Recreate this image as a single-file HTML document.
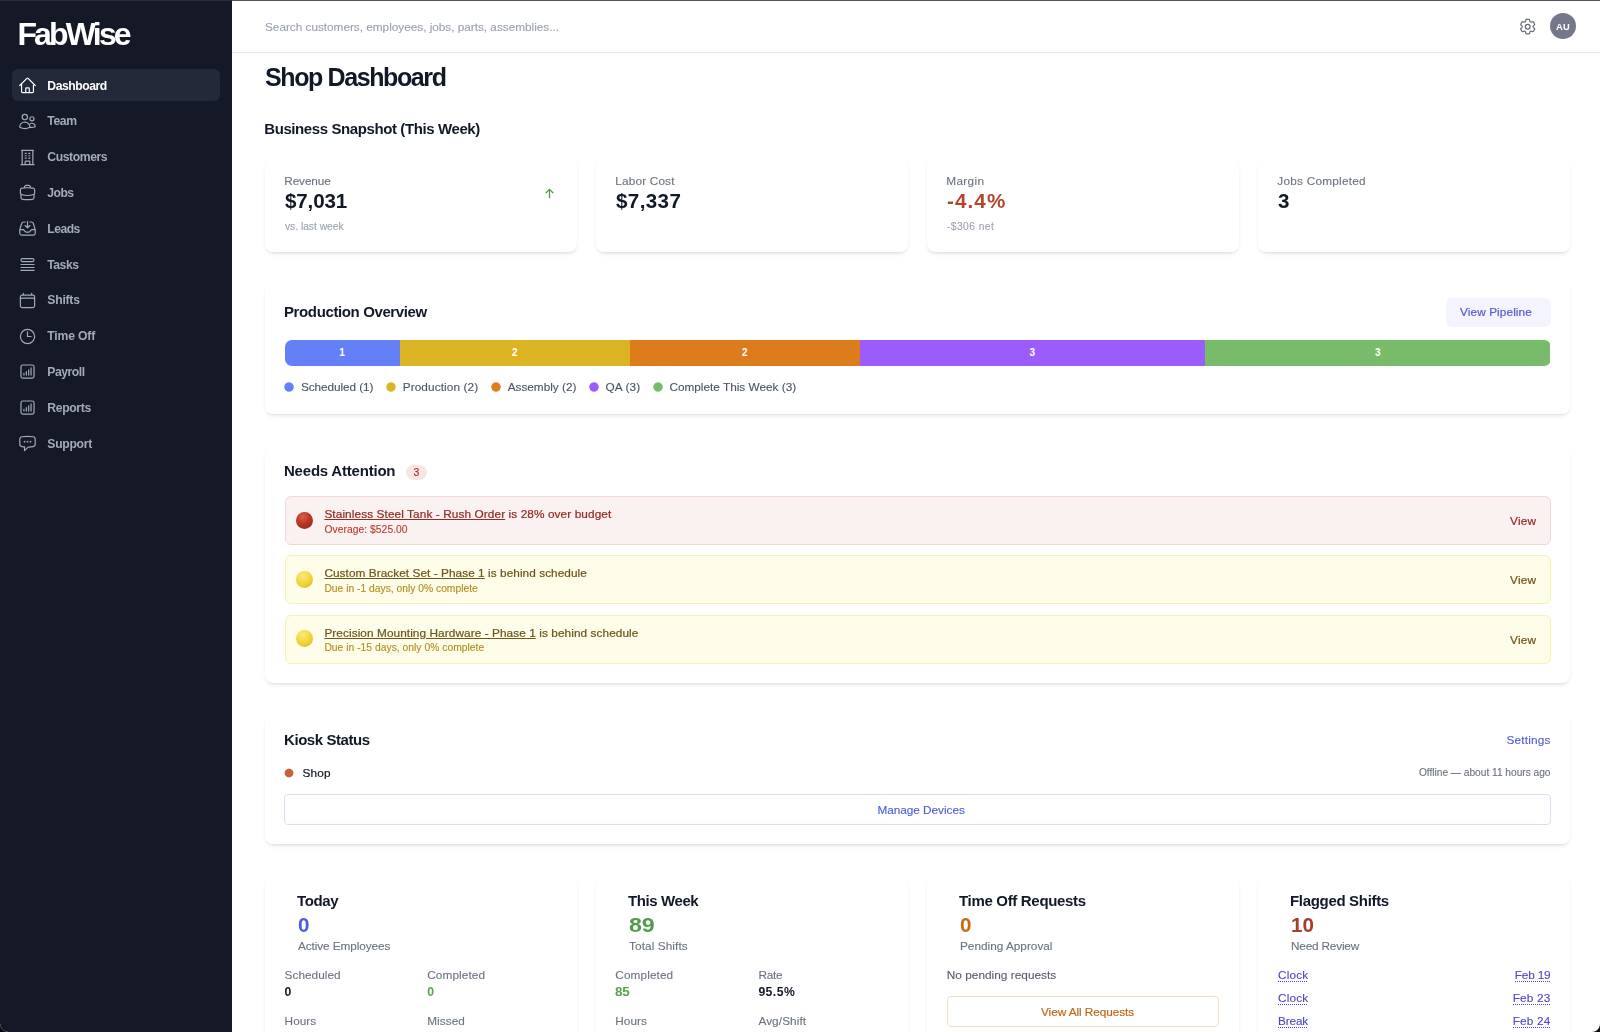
<!DOCTYPE html>
<html lang="en"><head>
<meta charset="utf-8">
<title>FabWise - Shop Dashboard</title>
<style>
*{box-sizing:border-box;margin:0;padding:0}
html,body{width:1600px;height:1032px;overflow:hidden;background:#fff}
body{position:relative;font-family:"Liberation Sans",sans-serif;font-size:11.8px;color:#111827;letter-spacing:-0.15px}
.abs{position:absolute}
.t{position:absolute;white-space:nowrap;line-height:20px;margin-top:-10px;will-change:opacity}
.b{font-weight:700}
.sm{font-size:12.2px}
body{-webkit-text-stroke:0.12px currentColor}
.b,.h2,.h3,.val,.val2,#sidebar,.seg,h1{-webkit-text-stroke:0}
a{color:inherit;text-decoration:none}
/* sidebar */
#sidebar{position:absolute;left:0;top:0;width:232px;height:1032px;background:#151827}
#sidebar .logo{left:17.4px;top:33.5px;font-size:32px;font-weight:700;color:#fff;line-height:40px;margin-top:-20px}
#sidebar nav a{position:absolute;left:11.8px;width:208px;height:32px;border-radius:6px;display:block;color:#a4a9b8;font-weight:700;font-size:12.2px}
#sidebar nav a.active{background:#232938;color:#fff}
#sidebar nav a svg{position:absolute;left:6.2px;top:6.9px;width:19px;height:19px;fill:none;stroke:currentColor;stroke-width:1.5;stroke-linecap:round;stroke-linejoin:round}
#sidebar nav a span{position:absolute;left:35.5px;top:16.4px;line-height:20px;margin-top:-10px;white-space:nowrap;will-change:opacity}
/* header */
#topline{position:absolute;left:0;top:0;width:1600px;height:1px;background:linear-gradient(90deg,#2b2d3e 232px,#555 232px)}
#header{position:absolute;left:232px;top:1px;width:1368px;height:52px;background:#fff;border-bottom:1px solid #e5e7eb}
/* cards */
.card{position:absolute;background:#fff;border-radius:8px;box-shadow:0 3px 5px -2px rgba(0,0,0,.13),0 1px 2px rgba(0,0,0,.035)}
.lbl{color:#6b7280}
.val{font-size:20.6px;font-weight:700}
.sub{font-size:10.3px;color:#9ca3af}
.h2{margin-left:-0.8px;font-size:15px;font-weight:700;color:#111827}

.h3{font-size:15px;font-weight:700;color:#111827;margin-left:-1px}
.val2{font-size:20.6px;font-weight:700}
.med{-webkit-text-stroke:0.22px currentColor}
.btn-soft{position:absolute;display:block;background:#f3f4fe;border-radius:6px;color:#555bd6}
.bar{position:absolute;border-radius:7px;overflow:hidden}
.seg{position:absolute;top:0;height:100%;text-align:center;color:#fff;font-weight:700;font-size:10px;will-change:opacity;line-height:26px;letter-spacing:0}
.dot{position:absolute;display:block;width:12px;height:12px;margin:-6px 0 0 -6px;--r:4.7px;background:radial-gradient(circle at 50% 50%,var(--c) calc(var(--r) - .5px),transparent calc(var(--r) + .5px))}
.leg{color:#4b5563}
.badge{position:absolute;display:block;border-radius:8px;background:#fbe4e4;color:#9b2c2c}
.alert{position:absolute;border-radius:6px;border:1px solid}
.alert.red{background:#faf2f1;border-color:#f2d6d8;color:#932a24}
.alert.red .l2{color:#bb3a2e}
.alert.yel{background:#fdfdea;border-color:#f7f1b4;color:#6e5518}
.alert.yel .l2{color:#b48c1c}
.alert .l1 a{text-decoration:underline;text-underline-offset:0.6px;text-decoration-thickness:0.9px}
.alert .l2{font-size:10.3px}
.alert .t{margin-top:-11px}
.emoji{position:absolute;display:block;width:17.4px;height:17.4px;border-radius:50%}
.emoji.r{background:radial-gradient(circle at 40% 28%,#d8604c 0%,#b93623 45%,#8e2416 100%)}
.emoji.y{background:radial-gradient(circle at 40% 28%,#fbea7a 0%,#f2d43a 50%,#d9b520 100%)}
.link{color:#4c5cd6}
.btn-outline{position:absolute;display:block;border:1px solid;border-radius:4px;background:#fff}
.btn-outline .t{margin-left:-1px;margin-top:-11px}
.flag{color:#5046c8;text-decoration:underline dotted;text-decoration-thickness:1px;text-underline-offset:2px}
</style>
</head>
<body>
<aside id="sidebar">
  <div class="t logo" style="letter-spacing: -2.84px;">FabWise</div>
  <nav>
    <a class="active" style="top:69.2px"><svg viewBox="0 0 24 24"><path d="m2.25 12 8.954-8.955c.44-.439 1.152-.439 1.591 0L21.75 12M4.5 9.75v10.125c0 .621.504 1.125 1.125 1.125H9.75v-4.875c0-.621.504-1.125 1.125-1.125h2.25c.621 0 1.125.504 1.125 1.125V21h4.125c.621 0 1.125-.504 1.125-1.125V9.75M8.25 21h8.25"></path></svg><span style="letter-spacing: -0.46px;">Dashboard</span></a>
    <a style="top:105.0px"><svg viewBox="0 0 24 24"><path d="M15 19.128a9.38 9.38 0 0 0 2.625.372 9.337 9.337 0 0 0 4.121-.952 4.125 4.125 0 0 0-7.533-2.493M15 19.128v-.003c0-1.113-.285-2.16-.786-3.07M15 19.128v.106A12.318 12.318 0 0 1 8.624 21c-2.331 0-4.512-.645-6.374-1.766l-.001-.109a6.375 6.375 0 0 1 11.964-3.07M12 6.375a3.375 3.375 0 1 1-6.75 0 3.375 3.375 0 0 1 6.75 0Zm8.25 2.25a2.625 2.625 0 1 1-5.25 0 2.625 2.625 0 0 1 5.25 0Z"></path></svg><span style="letter-spacing: -0.39px;">Team</span></a>
    <a style="top:140.8px"><svg viewBox="0 0 24 24"><path d="M3.75 21h16.5M4.5 3h15M5.25 3v18m13.5-18v18M9 6.75h1.5m-1.5 3h1.5m-1.5 3h1.5m3-6H15m-1.5 3H15m-1.5 3H15M9 21v-3.375c0-.621.504-1.125 1.125-1.125h3.75c.621 0 1.125.504 1.125 1.125V21"></path></svg><span style="letter-spacing: -0.42px;">Customers</span></a>
    <a style="top:176.6px"><svg viewBox="0 0 24 24"><path d="M20.25 14.15v4.25c0 1.094-.787 2.036-1.872 2.18-2.087.277-4.216.42-6.378.42s-4.291-.143-6.378-.42c-1.085-.144-1.872-1.086-1.872-2.18v-4.25m16.5 0a2.18 2.18 0 0 0 .75-1.661V8.706c0-1.081-.768-2.015-1.837-2.175a48.114 48.114 0 0 0-3.413-.387m4.5 8.006c-.194.165-.42.295-.673.38A23.978 23.978 0 0 1 12 15.75c-2.648 0-5.195-.429-7.577-1.22a2.016 2.016 0 0 1-.673-.38m0 0A2.18 2.18 0 0 1 3 12.489V8.706c0-1.081.768-2.015 1.837-2.175a48.111 48.111 0 0 1 3.413-.387m7.5 0V5.25A2.25 2.25 0 0 0 13.5 3h-3a2.25 2.25 0 0 0-2.25 2.25v.894m7.5 0a48.667 48.667 0 0 0-7.5 0"></path></svg><span style="letter-spacing: -0.53px;">Jobs</span></a>
    <a style="top:212.4px"><svg viewBox="0 0 24 24"><path d="M9 3.75H6.912a2.25 2.25 0 0 0-2.15 1.588L2.35 13.177a2.25 2.25 0 0 0-.1.661V18a2.25 2.25 0 0 0 2.25 2.25h15A2.25 2.25 0 0 0 21.75 18v-4.162c0-.224-.034-.447-.1-.661L19.24 5.338a2.25 2.25 0 0 0-2.15-1.588H15M2.25 13.5h3.86a2.25 2.25 0 0 1 2.012 1.244l.256.512a2.25 2.25 0 0 0 2.013 1.244h3.218a2.25 2.25 0 0 0 2.013-1.244l.256-.512a2.25 2.25 0 0 1 2.013-1.244h3.859M12 3v8.250m0 0-3-3m3 3 3-3"></path></svg><span style="letter-spacing: -0.54px;">Leads</span></a>
    <a style="top:248.2px"><svg viewBox="0 0 24 24"><path d="M3.75 12h16.5m-16.5 3.75h16.5M3.75 19.5h16.5M5.625 4.5h12.75a1.875 1.875 0 0 1 0 3.75H5.625a1.875 1.875 0 0 1 0-3.75Z"></path></svg><span style="letter-spacing: -0.5px;">Tasks</span></a>
    <a style="top:284.0px"><svg viewBox="0 0 24 24"><path d="M6.75 3v2.25M17.25 3v2.25M3 18.75V7.5a2.25 2.25 0 0 1 2.25-2.25h13.5A2.25 2.25 0 0 1 21 7.500v11.250m-18 0A2.25 2.25 0 0 0 5.25 21h13.5A2.25 2.25 0 0 0 21 18.750m-18 0v-7.500A2.25 2.25 0 0 1 5.250 9h13.500A2.250 2.250 0 0 1 21 11.250v7.500"></path></svg><span style="letter-spacing: -0.24px;">Shifts</span></a>
    <a style="top:319.8px"><svg viewBox="0 0 24 24"><path d="M12 6v6h4.5m4.5 0a9 9 0 1 1-18 0 9 9 0 0 1 18 0Z"></path></svg><span style="letter-spacing: -0.18px;">Time Off</span></a>
    <a style="top:355.6px"><svg viewBox="0 0 24 24"><path d="M7.5 14.25v2.25m3-4.5v4.5m3-6.75v6.75m3-9v9M6 20.25h12A2.25 2.25 0 0 0 20.250 18V6A2.250 2.250 0 0 0 18 3.750H6A2.250 2.250 0 0 0 3.750 6v12A2.250 2.250 0 0 0 6 20.250Z"></path></svg><span style="letter-spacing: -0.48px;">Payroll</span></a>
    <a style="top:391.4px"><svg viewBox="0 0 24 24"><path d="M7.5 14.25v2.25m3-4.5v4.5m3-6.75v6.75m3-9v9M6 20.25h12A2.25 2.25 0 0 0 20.250 18V6A2.250 2.250 0 0 0 18 3.750H6A2.250 2.250 0 0 0 3.750 6v12A2.250 2.250 0 0 0 6 20.250Z"></path></svg><span style="letter-spacing: -0.36px;">Reports</span></a>
    <a style="top:427.2px"><svg viewBox="0 0 24 24"><path d="M8.625 9.75a.375.375 0 1 1-.75 0 .375.375 0 0 1 .75 0Zm0 0H8.25m4.125 0a.375.375 0 1 1-.75 0 .375.375 0 0 1 .75 0Zm0 0H12m4.125 0a.375.375 0 1 1-.75 0 .375.375 0 0 1 .75 0Zm0 0h-.375m-13.5 3.01c0 1.6 1.123 2.994 2.707 3.227 1.087.16 2.185.283 3.293.369V21l4.184-4.183a1.14 1.14 0 0 1 .778-.332 48.294 48.294 0 0 0 5.83-.498c1.585-.233 2.708-1.626 2.708-3.228V6.741c0-1.602-1.123-2.995-2.707-3.228A48.394 48.394 0 0 0 12 3c-2.392 0-4.744.175-7.043.513C3.373 3.746 2.25 5.14 2.25 6.741v6.018Z"></path></svg><span style="letter-spacing: -0.29px;">Support</span></a>
  </nav>
</aside>
<div id="topline"></div>
<header id="header">
  <div class="t" style="left: 33px; top: 26px; font-size: 11.8px; color: rgb(154, 161, 173); letter-spacing: -0.02px;">Search customers, employees, jobs, parts, assemblies...</div>
  <svg class="abs" style="left:1285.6px;top:15.9px;width:19.4px;height:19.4px;fill:none;stroke:#686c76;stroke-width:1.5;stroke-linecap:round;stroke-linejoin:round" viewBox="0 0 24 24"><path d="M9.594 3.94c.09-.542.56-.94 1.11-.94h2.593c.55 0 1.02.398 1.11.94l.213 1.281c.063.374.313.686.645.87.074.04.147.083.22.127.325.196.72.257 1.075.124l1.217-.456a1.125 1.125 0 0 1 1.37.49l1.296 2.247a1.125 1.125 0 0 1-.26 1.431l-1.003.827c-.293.241-.438.613-.43.992a7.723 7.723 0 0 1 0 .255c-.008.378.137.75.43.991l1.004.827c.424.35.534.955.26 1.43l-1.298 2.247a1.125 1.125 0 0 1-1.369.491l-1.217-.456c-.355-.133-.75-.072-1.076.124a6.470 6.470 0 0 1-.22.128c-.331.183-.581.495-.644.869l-.213 1.281c-.09.543-.56.940-1.110.940h-2.594c-.55 0-1.019-.398-1.110-.940l-.213-1.281c-.062-.374-.312-.686-.644-.870a6.520 6.520 0 0 1-.22-.127c-.325-.196-.72-.257-1.076-.124l-1.217.456a1.125 1.125 0 0 1-1.369-.490l-1.297-2.247a1.125 1.125 0 0 1 .26-1.431l1.004-.827c.292-.24.437-.613.43-.991a6.932 6.932 0 0 1 0-.255c.007-.38-.138-.751-.43-.992l-1.004-.827a1.125 1.125 0 0 1-.26-1.430l1.297-2.247a1.125 1.125 0 0 1 1.370-.491l1.216.456c.356.133.751.072 1.076-.124.072-.044.146-.086.22-.128.332-.183.582-.495.644-.869l.214-1.280Z"></path><path d="M15 12a3 3 0 1 1-6 0 3 3 0 0 1 6 0Z"></path></svg>
  <div class="abs" style="left:1318px;top:12.4px;width:26px;height:26px;border-radius:50%;background:#74788a"></div>
  <div class="t b sm" style="left:1318px;width:26px;text-align:center;top:25.5px;font-size:9.3px;color:#fff;letter-spacing:0.2px">AU</div>
</header>
<main id="main">
  <h1 class="t b" style="left: 265px; top: 77px; font-size: 25px; line-height: 30px; margin-top: -15px; color: rgb(17, 24, 39); letter-spacing: -1.39px;">Shop Dashboard</h1>
  <h2 class="t h2" style="left: 265px; top: 128.8px; letter-spacing: -0.4px;">Business Snapshot (This Week)</h2>

  <!-- snapshot cards -->
  <section class="card" style="left:265px;top:158px;width:312px;height:94px">
    <div class="t lbl" style="left: 19.3px; top: 22.6px; letter-spacing: -0.13px;">Revenue</div>
    <div class="t val" style="left: 20px; top: 43.4px; letter-spacing: -0.15px;">$7,031</div>
    <div class="t sub" style="left: 20px; top: 69.2px; letter-spacing: -0.03px;">vs. last week</div>
    <svg class="abs" style="left:278.8px;top:30px;width:11px;height:11px;fill:none;stroke:#4f9a3f;stroke-width:2.7;stroke-linecap:round;stroke-linejoin:round" viewBox="0 0 24 24"><path d="M4.5 10.5 12 3m0 0 7.5 7.500M12 3v18"></path></svg>
  </section>
  <section class="card" style="left:596px;top:158px;width:312px;height:94px">
    <div class="t lbl" style="left: 19.3px; top: 22.6px; letter-spacing: 0.16px;">Labor Cost</div>
    <div class="t val" style="left: 20px; top: 43.4px; letter-spacing: 0.37px;">$7,337</div>
  </section>
  <section class="card" style="left:927px;top:158px;width:312px;height:94px">
    <div class="t lbl" style="left: 19.3px; top: 22.6px; letter-spacing: 0.32px;">Margin</div>
    <div class="t val" style="left: 20px; top: 43.4px; color: rgb(180, 68, 45); letter-spacing: 1.11px;">-4.4%</div>
    <div class="t sub" style="left: 20px; top: 69.2px; letter-spacing: 0.41px;">-$306 net</div>
  </section>
  <section class="card" style="left:1258px;top:158px;width:312px;height:94px">
    <div class="t lbl" style="left: 19.3px; top: 22.6px; letter-spacing: 0.24px;">Jobs Completed</div>
    <div class="t val" style="left:20px;top:43.4px">3</div>
  </section>

  <!-- production overview -->
  <section class="card" style="left:265px;top:283px;width:1305px;height:131px">
    <h3 class="t h3" style="left: 20px; top: 29px; letter-spacing: -0.38px;">Production Overview</h3>
    <a class="btn-soft" style="left:1181px;top:14.6px;width:104.5px;height:29px"><span class="t med" style="left: 14px; top: 14.4px; letter-spacing: 0.1px;">View Pipeline</span></a>
    <div class="bar" style="left:19.5px;top:56.6px;width:1266px;height:26px">
      <div class="seg" style="left:0;width:115px;background:#6480f7"><span>1</span></div>
      <div class="seg" style="left:115px;width:230.5px;background:#dbb424"><span>2</span></div>
      <div class="seg" style="left:345.5px;width:229.7px;background:#dc7c1c"><span>2</span></div>
      <div class="seg" style="left:575.2px;width:345.2px;background:#9c5cfa"><span>3</span></div>
      <div class="seg" style="left:920.4px;width:345.6px;background:#77bb6b"><span>3</span></div>
    </div>
    <i class="dot" style="left:24.2px;top:104px;--c:#6480f7"></i><div class="t leg" style="left: 36px; top: 104px; letter-spacing: -0.08px;">Scheduled (1)</div>
    <i class="dot" style="left:125.6px;top:104px;--c:#dbb424"></i><div class="t leg" style="left: 137.7px; top: 104px; letter-spacing: 0.1px;">Production (2)</div>
    <i class="dot" style="left:230.6px;top:104px;--c:#dc7c1c"></i><div class="t leg" style="left: 242.7px; top: 104px; letter-spacing: -0.01px;">Assembly (2)</div>
    <i class="dot" style="left:329.1px;top:104px;--c:#9c5cfa"></i><div class="t leg" style="left: 340.5px; top: 104px; letter-spacing: 0.11px;">QA (3)</div>
    <i class="dot" style="left:392.8px;top:104px;--c:#77bb6b"></i><div class="t leg" style="left: 404.4px; top: 104px; letter-spacing: 0px;">Complete This Week (3)</div>
  </section>

  <!-- needs attention -->
  <section class="card" style="left:265px;top:446px;width:1305px;height:237px">
    <h3 class="t h3" style="left: 20px; top: 25.2px; letter-spacing: -0.21px;">Needs Attention</h3>
    <span class="badge" style="left:140.6px;top:19px;width:21.8px;height:15px"><span class="t" style="left:0;width:21.8px;text-align:center;top:7.6px;font-size:10.4px;letter-spacing:0">3</span></span>
    <div class="alert red" style="left:19.6px;top:50px;width:1266px;height:48.6px">
      <i class="emoji r" style="left:10.2px;top:14.5px"></i>
      <div class="t l1 med" style="left: 38.8px; top: 18.1px; letter-spacing: 0.1px;"><a href="#">Stainless Steel Tank - Rush Order</a> is 28% over budget</div>
      <div class="t l2" style="left: 38.8px; top: 33.5px; letter-spacing: 0.05px;">Overage: $525.00</div>
      <a class="t med view" style="right: 13.5px; top: 25.2px; letter-spacing: 0.16px;" href="#">View</a>
    </div>
    <div class="alert yel" style="left:19.6px;top:109.2px;width:1266px;height:49px">
      <i class="emoji y" style="left:10.2px;top:14.5px"></i>
      <div class="t l1 med" style="left: 38.8px; top: 18.1px; letter-spacing: 0.06px;"><a href="#">Custom Bracket Set - Phase 1</a> is behind schedule</div>
      <div class="t l2" style="left: 38.8px; top: 33.5px; letter-spacing: 0px;">Due in -1 days, only 0% complete</div>
      <a class="t med view" style="right: 13.5px; top: 25.2px; letter-spacing: 0.16px;" href="#">View</a>
    </div>
    <div class="alert yel" style="left:19.6px;top:168.5px;width:1266px;height:49px">
      <i class="emoji y" style="left:10.2px;top:14.5px"></i>
      <div class="t l1 med" style="left: 38.8px; top: 18.1px; letter-spacing: 0.08px;"><a href="#">Precision Mounting Hardware - Phase 1</a> is behind schedule</div>
      <div class="t l2" style="left: 38.8px; top: 33.5px; letter-spacing: 0.02px;">Due in -15 days, only 0% complete</div>
      <a class="t med view" style="right: 13.5px; top: 25.2px; letter-spacing: 0.16px;" href="#">View</a>
    </div>
  </section>

  <!-- kiosk status -->
  <section class="card" style="left:265px;top:715px;width:1305px;height:129px">
    <h3 class="t h3" style="left: 20px; top: 24.8px; letter-spacing: -0.43px;">Kiosk Status</h3>
    <a class="t link" style="right: 19.5px; top: 24.8px; letter-spacing: 0.16px;" href="#">Settings</a>
    <i class="dot" style="left:23.5px;top:57.8px;--r:4.35px;--c:#c95f3f"></i>
    <div class="t med" style="left: 37.6px; top: 58.1px; color: rgb(17, 24, 39); letter-spacing: 0.13px;">Shop</div>
    <div class="t" style="right: 19.5px; top: 57.6px; font-size: 10.2px; color: rgb(107, 114, 128); letter-spacing: -0.02px;">Offline — about 11 hours ago</div>
    <a class="btn-outline" style="left:19px;top:79px;width:1266.6px;height:31px;border-color:#dadef5" href="#"><span class="t link" style="left: 593.4px; top: 15.8px; letter-spacing: -0.03px;">Manage Devices</span></a>
  </section>

  <!-- stat cards -->
  <section class="card stat" style="left:265px;top:876px;width:312px;height:200px">
    <h3 class="t h3" style="left: 33px; top: 24.8px; letter-spacing: -0.39px;">Today</h3>
    <div class="t val2" style="left:33px;top:48.8px;color:#4f5fdb">0</div>
    <div class="t lbl" style="left: 33px; top: 69.8px; letter-spacing: -0.09px;">Active Employees</div>
    <div class="t lbl" style="left: 19.6px; top: 99.2px; letter-spacing: 0.03px;">Scheduled</div>
    <div class="t b sm" style="left:19.6px;top:115.8px;color:#111827">0</div>
    <div class="t lbl" style="left: 162.2px; top: 99.2px; letter-spacing: 0.1px;">Completed</div>
    <div class="t b sm" style="left:162.2px;top:115.8px;color:#5aa04e">0</div>
    <div class="t lbl" style="left: 19.6px; top: 144.6px; letter-spacing: 0.02px;">Hours</div>
    <div class="t lbl" style="left: 162.2px; top: 144.6px; letter-spacing: 0.07px;">Missed</div>
  </section>
  <section class="card stat" style="left:596px;top:876px;width:312px;height:200px">
    <h3 class="t h3" style="left: 33px; top: 24.8px; letter-spacing: -0.4px;">This Week</h3>
    <div class="t val2" style="left:33px;top:48.8px;color:#539a4b;transform:scaleX(1.13);transform-origin:0 50%">89</div>
    <div class="t lbl" style="left: 33px; top: 69.8px; letter-spacing: 0.09px;">Total Shifts</div>
    <div class="t lbl" style="left: 19.3px; top: 99.2px; letter-spacing: 0.1px;">Completed</div>
    <div class="t b sm" style="left:19.3px;top:115.8px;color:#5aa04e;transform:scaleX(1.1);transform-origin:0 50%">85</div>
    <div class="t lbl" style="left: 162.4px; top: 99.2px; letter-spacing: -0.26px;">Rate</div>
    <div class="t b sm" style="left: 162.4px; top: 115.8px; color: rgb(17, 24, 39); letter-spacing: 0.45px;">95.5%</div>
    <div class="t lbl" style="left: 19.3px; top: 144.6px; letter-spacing: 0.02px;">Hours</div>
    <div class="t lbl" style="left: 162.4px; top: 144.6px; letter-spacing: 0.09px;">Avg/Shift</div>
  </section>
  <section class="card stat" style="left:927px;top:876px;width:312px;height:200px">
    <h3 class="t h3" style="left: 33px; top: 24.8px; letter-spacing: -0.32px;">Time Off Requests</h3>
    <div class="t val2" style="left:33px;top:48.8px;color:#c86a14">0</div>
    <div class="t lbl" style="left: 33px; top: 69.8px; letter-spacing: 0px;">Pending Approval</div>
    <div class="t" style="left: 19.8px; top: 99px; color: rgb(86, 93, 107); letter-spacing: 0.03px;">No pending requests</div>
    <a class="btn-outline" style="left:19.8px;top:120.4px;width:272px;height:30.2px;border-color:#f8dcc0" href="#"><span class="t med" style="left: 94.2px; top: 15.8px; color: rgb(192, 106, 28); letter-spacing: -0.06px;">View All Requests</span></a>
  </section>
  <section class="card stat" style="left:1258px;top:876px;width:312px;height:200px">
    <h3 class="t h3" style="left: 33px; top: 24.8px; letter-spacing: -0.32px;">Flagged Shifts</h3>
    <div class="t val2" style="left: 33px; top: 48.8px; color: rgb(166, 60, 42); letter-spacing: 0.13px;">10</div>
    <div class="t lbl" style="left: 33px; top: 69.8px; letter-spacing: -0.19px;">Need Review</div>
    <a class="t flag" style="left: 20px; top: 99px; letter-spacing: 0.19px;" href="#">Clock</a><a class="t flag" style="right: 19.5px; top: 99px; letter-spacing: -0.16px;" href="#">Feb 19</a>
    <a class="t flag" style="left: 20px; top: 121.9px; letter-spacing: 0.19px;" href="#">Clock</a><a class="t flag" style="right: 19.5px; top: 121.9px; letter-spacing: 0.18px;" href="#">Feb 23</a>
    <a class="t flag" style="left: 20px; top: 144.6px; letter-spacing: -0.15px;" href="#">Break</a><a class="t flag" style="right: 19.5px; top: 144.6px; letter-spacing: 0.18px;" href="#">Feb 24</a>
  </section>
</main>
<div class="abs" style="right:0;bottom:0;width:8px;height:8px;background:radial-gradient(circle at 0 0,transparent 7.4px,#111 8.4px)"></div>
<div class="abs" style="left:0;bottom:0;width:8px;height:8px;background:radial-gradient(circle at 100% 0,transparent 7px,#4a4d5c 7.6px,#08090f 8.6px)"></div>


</body></html>
